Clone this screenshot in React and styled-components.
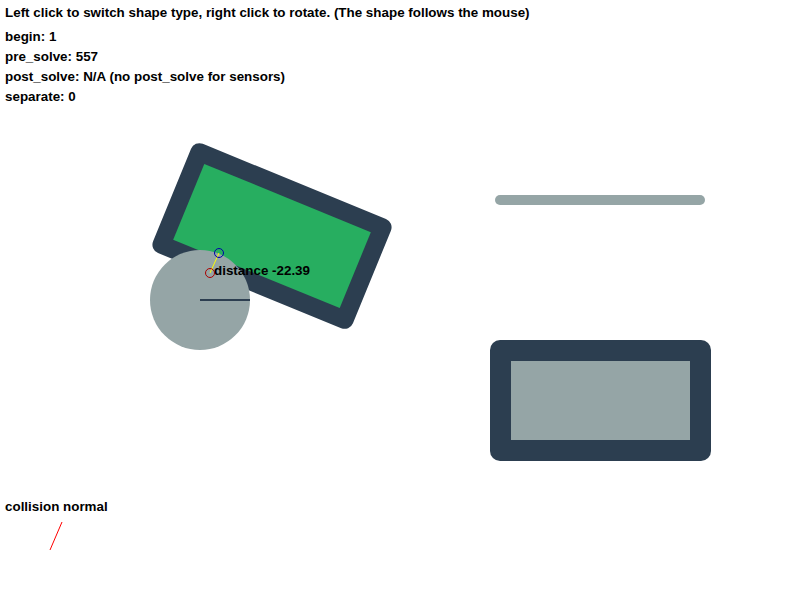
import React from "react";
import styled, { createGlobalStyle } from "styled-components";

const Global = createGlobalStyle`
  html, body { margin: 0; padding: 0; background: #ffffff; }
  body { font-family: "Liberation Sans", Arial, sans-serif; }
`;

const Stage = styled.div`
  position: relative;
  width: 800px;
  height: 600px;
  overflow: hidden;
  background: #ffffff;
`;

const Canvas = styled.svg`
  position: absolute;
  left: 0;
  top: 0;
`;

const Info = styled.div`
  position: relative;
  display: flex;
  flex-direction: column;
  padding: 5px 0 0 5px;
  gap: 5px;
`;

const Line = styled.div`
  font-family: "Liberation Sans", Arial, sans-serif;
  font-weight: bold;
  font-size: 13.4px;
  line-height: 15px;
  color: #000;
  white-space: nowrap;
  margin-bottom: ${(p) => (p.$gap ? "4px" : "0")};
`;

const Label = styled.div`
  position: absolute;
  left: ${(p) => p.$x}px;
  top: ${(p) => p.$y}px;
  font-family: "Liberation Sans", Arial, sans-serif;
  font-weight: bold;
  font-size: 13.4px;
  line-height: 15px;
  color: #000;
  white-space: nowrap;
`;

const DARK = "#2c3e50";
const GRAY = "#95a5a6";
const GREEN = "#27ae60";

export default function App() {
  return (
    <Stage>
      <Global />
      <Canvas width="800" height="600" viewBox="0 0 800 600">
        <g transform="translate(272 236) rotate(22.3)">
          <rect x="-108" y="-59" width="216" height="118" rx="9" fill={DARK} />
          <rect x="-90" y="-41" width="180" height="82" fill={GREEN} />
        </g>
        <circle cx="200" cy="300" r="50" fill={GRAY} />
        <line x1="200" y1="300" x2="250" y2="300" stroke={DARK} strokeWidth="2" />
        <line x1="500" y1="200" x2="700" y2="200" stroke={GRAY} strokeWidth="10" strokeLinecap="round" />
        <rect x="490" y="340" width="221" height="121" rx="10" fill={DARK} />
        <rect x="511" y="361" width="179" height="79" fill={GRAY} />
        <line x1="219" y1="253" x2="210" y2="273" stroke="#ffff00" strokeWidth="1" />
        <circle cx="219" cy="253" r="4.5" fill="none" stroke="#0000aa" strokeWidth="1" />
        <circle cx="210" cy="273" r="4.5" fill="none" stroke="#aa0000" strokeWidth="1" />
        <line x1="62" y1="522" x2="50" y2="550" stroke="#ff0000" strokeWidth="1" />
      </Canvas>
      <Info>
        <Line $gap>Left click to switch shape type, right click to rotate. (The shape follows the mouse)</Line>
        <Line>begin: 1</Line>
        <Line>pre_solve: 557</Line>
        <Line>post_solve: N/A (no post_solve for sensors)</Line>
        <Line>separate: 0</Line>
      </Info>
      <Label $x={214} $y={263}>distance -22.39</Label>
      <Label $x={5} $y={499}>collision normal</Label>
    </Stage>
  );
}
